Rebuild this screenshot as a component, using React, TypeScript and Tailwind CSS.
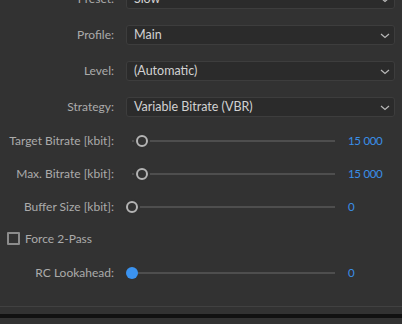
import React from "react";

const font = { fontFamily: 'Lato, "Noto Sans", Arial, sans-serif' };

function Chevron() {
  return (
    <svg width="10" height="6" viewBox="0 0 10 6" className="absolute right-[4px] top-[7px]">
      <path d="M1 1 L5 4.5 L9 1" fill="none" stroke="#b8b8b8" strokeWidth="1.2" />
    </svg>
  );
}

function DropRow({ label, value, mb = "mb-[16px]" }: { label: string; value: string; mb?: string }) {
  return (
    <div className={`flex items-center h-[20px] ${mb}`}>
      <div className="w-[114px] text-right text-[12px] text-[#ababab] leading-none">{label}</div>
      <div className="relative ml-[12px] w-[269px] h-[20px] rounded-[3px] border border-[#3d3d3d] bg-[#2b2b2b] flex items-center pl-[7px] text-[12.5px] text-[#d2d2d2] leading-none">
        {value}
        <Chevron />
      </div>
    </div>
  );
}

function SliderRow({
  label,
  pos,
  value,
  active,
  mb,
}: {
  label: string;
  pos: number;
  value: string;
  active?: boolean;
  mb: string;
}) {
  return (
    <div className={`flex items-center h-[22px] ${mb}`}>
      <div className="w-[114px] text-right text-[12px] text-[#ababab] leading-none">{label}</div>
      <div className="relative ml-[18px] w-[203px] h-[22px] flex items-center">
        <div className="w-full h-[2px] bg-[#4e4e4e]" />
        {active ? (
          <div
            className="absolute top-[5px] w-[12px] h-[12px] -ml-[6px] rounded-full bg-[#3b93f0]"
            style={{ left: pos }}
          />
        ) : (
          <div
            className="absolute top-[5px] w-[12px] h-[12px] -ml-[6px] rounded-full border-2 border-[#b4b4b4] bg-[#323232] shadow-[0_0_0_2px_#323232]"
            style={{ left: pos }}
          />
        )}
      </div>
      <div className="ml-[13px] text-[11.5px] tracking-[-0.3px] text-[#3a8fe8] leading-none">{value}</div>
    </div>
  );
}

export default function App() {
  return (
    <div className="w-[402px] h-[324px] bg-[#323232] overflow-hidden flex flex-col" style={font}>
      <div className="mt-[-11px] flex flex-col">
        <DropRow label="Preset:" value="Slow" />
        <DropRow label="Profile:" value="Main" />
        <DropRow label="Level:" value="(Automatic)" />
        <DropRow label="Strategy:" value="Variable Bitrate (VBR)" mb="mb-[13px]" />
        <SliderRow label="Target Bitrate [kbit]:" pos={10} value="15 000" mb="mb-[11px]" />
        <SliderRow label="Max. Bitrate [kbit]:" pos={10} value="15 000" mb="mb-[11px]" />
        <SliderRow label="Buffer Size [kbit]:" pos={0} value="0" mb="mb-[14px]" />
        <div className="flex items-center h-[13px] mb-[17px]">
          <div className="ml-[7px] w-[13px] h-[13px] border-2 border-[#8c8c8c] rounded-[1px]" />
          <div className="ml-[5px] text-[12px] text-[#ababab] leading-none">Force 2-Pass</div>
        </div>
        <SliderRow label="RC Lookahead:" pos={0} value="0" active mb="mb-[22px]" />
        <div className="h-[1px] bg-[#414141]" />
        <div className="h-[7px]" />
        <div className="h-[4px] bg-[#111111]" />
      </div>
    </div>
  );
}
